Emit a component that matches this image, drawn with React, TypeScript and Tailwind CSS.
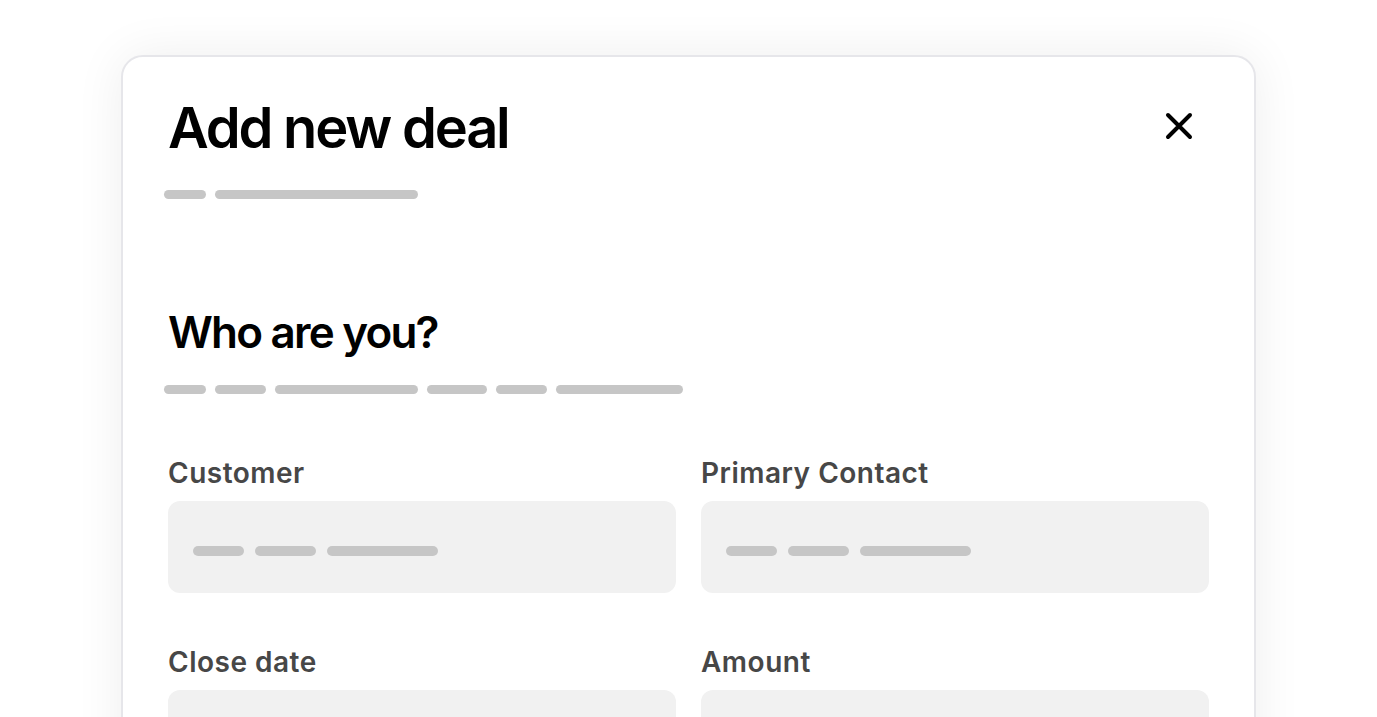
const font = { fontFamily: 'Inter, "Noto Sans", sans-serif' };

function Bars({ widths, gap = 'gap-[9px]', height = 'h-[9px]' }: { widths: number[]; gap?: string; height?: string }) {
  return (
    <div className={`flex ${gap}`}>
      {widths.map((w, i) => (
        <div key={i} className={`${height} rounded-full bg-[#c6c6c6]`} style={{ width: w }} />
      ))}
    </div>
  );
}

function Field({ label, bars }: { label: string; bars?: number[] }) {
  return (
    <div className="flex flex-col">
      <div className="text-[28px] leading-[28px] font-semibold text-[#474747] tracking-[0.5px]">{label}</div>
      <div className="mt-[14px] h-[92px] rounded-[12px] bg-[#f1f1f1] px-[25px] pt-[45px]">
        {bars && <Bars widths={bars} gap="gap-[11px]" height="h-[10px]" />}
      </div>
    </div>
  );
}

export default function App() {
  return (
    <div className="min-h-screen bg-white overflow-hidden" style={font}>
      <div className="mx-auto mt-[55px] w-[1135px] min-h-[800px] rounded-[22px] border-2 border-[#e6e6ea] bg-white px-[45px] pt-[43px] shadow-[0_0_50px_rgba(0,0,0,0.07)]">
        {/* Header */}
        <div className="flex items-start justify-between">
          <h1 className="text-[56px] leading-[56px] font-semibold text-black tracking-[-2.2px]">Add new deal</h1>
          <button aria-label="Close" className="mt-[12px] mr-[16px]">
            <svg width="28" height="28" viewBox="0 0 28 28" fill="none">
              <path d="M3 3L25 25M25 3L3 25" stroke="#000" strokeWidth="4" strokeLinecap="round" />
            </svg>
          </button>
        </div>
        <div className="mt-[34px] -ml-[4px]">
          <Bars widths={[42, 203]} />
        </div>

        {/* Section */}
        <h2 className="mt-[111px] text-[44px] leading-[44px] font-semibold text-black tracking-[-1.8px]">Who are you?</h2>
        <div className="mt-[31px] -ml-[4px]">
          <Bars widths={[42, 51, 143, 60, 51, 127]} />
        </div>

        <div className="mt-[65px] grid grid-cols-2 gap-x-[25px] gap-y-[55px]">
          <Field label="Customer" bars={[51, 61, 111]} />
          <Field label="Primary Contact" bars={[51, 61, 111]} />
          <Field label="Close date" />
          <Field label="Amount" />
        </div>
      </div>
    </div>
  );
}
